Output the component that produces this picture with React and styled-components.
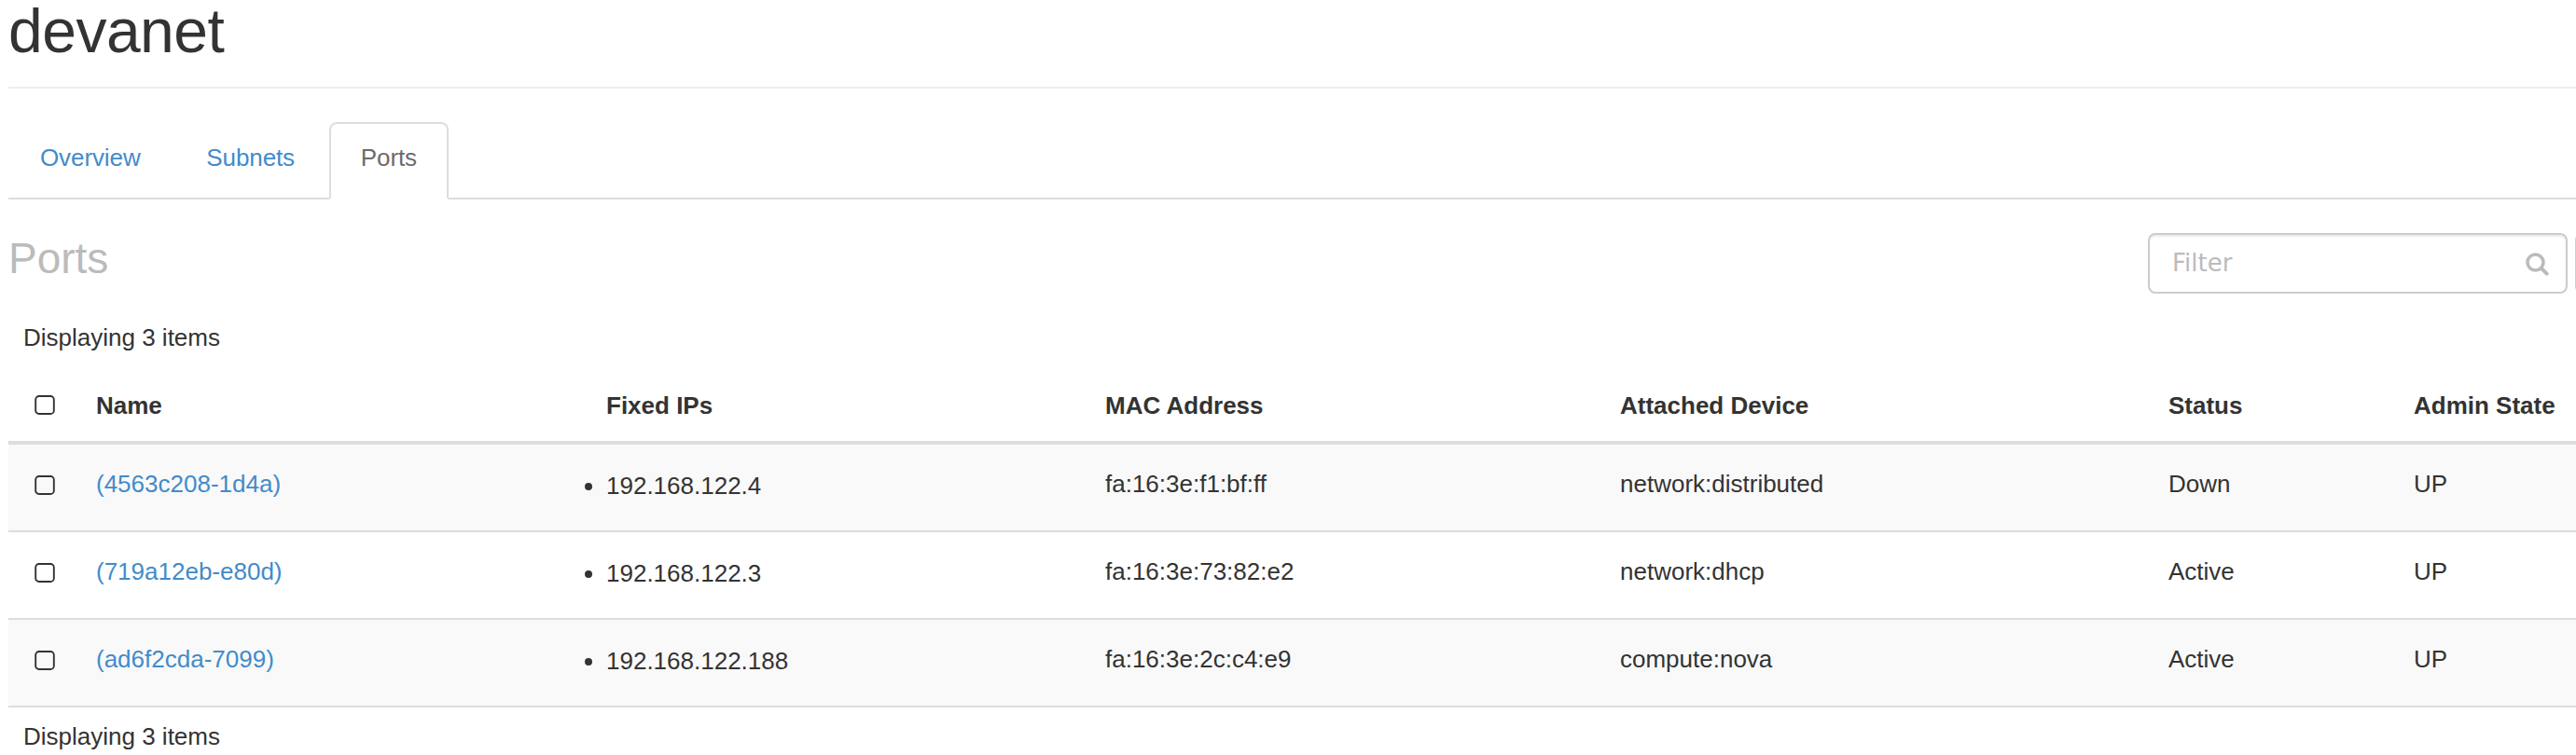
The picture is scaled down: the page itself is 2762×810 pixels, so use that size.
import React from "react";
import styled, { createGlobalStyle } from "styled-components";

const Global = createGlobalStyle`
  * { box-sizing: border-box; }
  html, body { margin: 0; padding: 0; background: #fff; overflow: hidden; }
  body { font: 26px/38px "Liberation Sans", Arial, sans-serif; color: #333; }
`;
const Page = styled.div`width: 2762px; height: 810px; padding-left: 9px; overflow: hidden;`;
const Header = styled.header`height: 95px; border-bottom: 2px solid #eee;`;
const Title = styled.h1`margin: 0; font-size: 66px; font-weight: 400; line-height: 66px; letter-spacing: -0.5px;`;
const Tabs = styled.nav`
  display: flex; align-items: flex-end; height: 83px; margin-top: 36px; border-bottom: 2px solid #ddd;
`;
const Tab = styled.a`
  height: ${(p) => (p.$active ? 83 : 81)}px;
  margin: 0 ${(p) => (p.$active ? 0 : 2.75)}px ${(p) => (p.$active ? -2 : 0)}px 0;
  padding: 17px 32px 0;
  border: 2px solid ${(p) => (p.$active ? "#ddd" : "transparent")};
  border-bottom-color: ${(p) => (p.$active ? "#fff" : "transparent")};
  border-radius: 8px 8px 0 0;
  background: ${(p) => (p.$active ? "#fff" : "transparent")};
  color: ${(p) => (p.$active ? "#6b6b6b" : "#428bca")};
  letter-spacing: -0.1px;
`;
const Toolbar = styled.div`display: flex; justify-content: space-between; height: 116px; padding-top: 36px;`;
const Heading = styled.h2`margin: 0; font-size: 46px; font-weight: 400; line-height: 54px; color: #bbb;`;
const Controls = styled.div`display: flex; flex: none; gap: 8px; width: 459px;`;
const Search = styled.label`
  display: flex; align-items: center; justify-content: space-between; flex: none;
  width: 450px; height: 65px; padding: 0 18px 0 24px;
  border: 2px solid #ccc; border-radius: 8px; box-shadow: inset 0 2px 2px rgba(0, 0, 0, 0.075);
`;
const SearchInput = styled.input`
  width: 300px; padding: 0 0 2px; border: 0; outline: 0; background: transparent;
  font: 26px/38px "DejaVu Sans", sans-serif;
  &::placeholder { color: #bbb; opacity: 1; }
`;
const SearchGlyph = styled.svg`flex: none; margin-top: 2px;`;
const FilterButton = styled.button`
  flex: none; width: 100px; height: 65px; padding: 0; border: 2px solid #ccc; border-radius: 8px; background: #fff;
`;
const Count = styled.div`padding: ${(p) => (p.$foot ? 12 : 13)}px 16px 0; height: ${(p) => (p.$foot ? 51 : 66)}px;`;
const Row = styled.div`
  display: grid; align-items: start;
  grid-template-columns: 94px 547px 535px 552px 588px 263px 174px;
  height: ${(p) => (p.$head ? 81 : 94)}px;
  padding-top: ${(p) => (p.$head ? 20 : 23)}px;
  border-bottom: ${(p) => (p.$head ? 4 : 2)}px solid #ddd;
  background: ${(p) => (p.$striped ? "#f9f9f9" : "#fff")};
  font-weight: ${(p) => (p.$head ? 700 : 400)};
`;
const Cell = styled.div`white-space: nowrap;`;
const CheckCell = styled.div`padding: ${(p) => (p.$head ? 8 : 10)}px 0 0 28px; line-height: 0;`;
const Link = styled.a`color: #428bca;`;
const IpList = styled.ul`margin: 2px 0 0; padding: 0; list-style: disc outside;`;

const Box = () => (
  <svg width="22" height="22" viewBox="0 0 22 22" fill="none">
    <rect x="1.2" y="1" width="19.6" height="19" rx="3.6" stroke="#333" strokeWidth="1.9" />
  </svg>
);
const SearchIcon = () => (
  <SearchGlyph width="25" height="25" viewBox="0 0 25 25" fill="none" stroke="#bbb">
    <circle cx="10.5" cy="10.5" r="8.5" strokeWidth="3.6" />
    <path d="M17 17l5.6 5.6" strokeWidth="4" strokeLinecap="round" />
  </SearchGlyph>
);

const ports = [
  ["(4563c208-1d4a)", "192.168.122.4", "fa:16:3e:f1:bf:ff", "network:distributed", "Down", "UP"],
  ["(719a12eb-e80d)", "192.168.122.3", "fa:16:3e:73:82:e2", "network:dhcp", "Active", "UP"],
  ["(ad6f2cda-7099)", "192.168.122.188", "fa:16:3e:2c:c4:e9", "compute:nova", "Active", "UP"],
];
const columns = ["Name", "Fixed IPs", "MAC Address", "Attached Device", "Status", "Admin State"];

export default function App() {
  return (
    <Page>
      <Global />
      <Header><Title>devanet</Title></Header>
      <Tabs>
        <Tab>Overview</Tab>
        <Tab>Subnets</Tab>
        <Tab $active>Ports</Tab>
      </Tabs>
      <Toolbar>
        <Heading>Ports</Heading>
        <Controls>
          <Search><SearchInput placeholder="Filter" /><SearchIcon /></Search>
          <FilterButton aria-label="Filter" />
        </Controls>
      </Toolbar>
      <Count>Displaying 3 items</Count>
      <Row $head>
        <CheckCell $head><Box /></CheckCell>
        {columns.map((c) => <Cell key={c}>{c}</Cell>)}
      </Row>
      {ports.map(([name, ip, mac, device, status, admin], i) => (
        <Row key={name} $striped={i % 2 === 0}>
          <CheckCell><Box /></CheckCell>
          <Cell><Link>{name}</Link></Cell>
          <Cell><IpList><li>{ip}</li></IpList></Cell>
          <Cell>{mac}</Cell>
          <Cell>{device}</Cell>
          <Cell>{status}</Cell>
          <Cell>{admin}</Cell>
        </Row>
      ))}
      <Count $foot>Displaying 3 items</Count>
    </Page>
  );
}
